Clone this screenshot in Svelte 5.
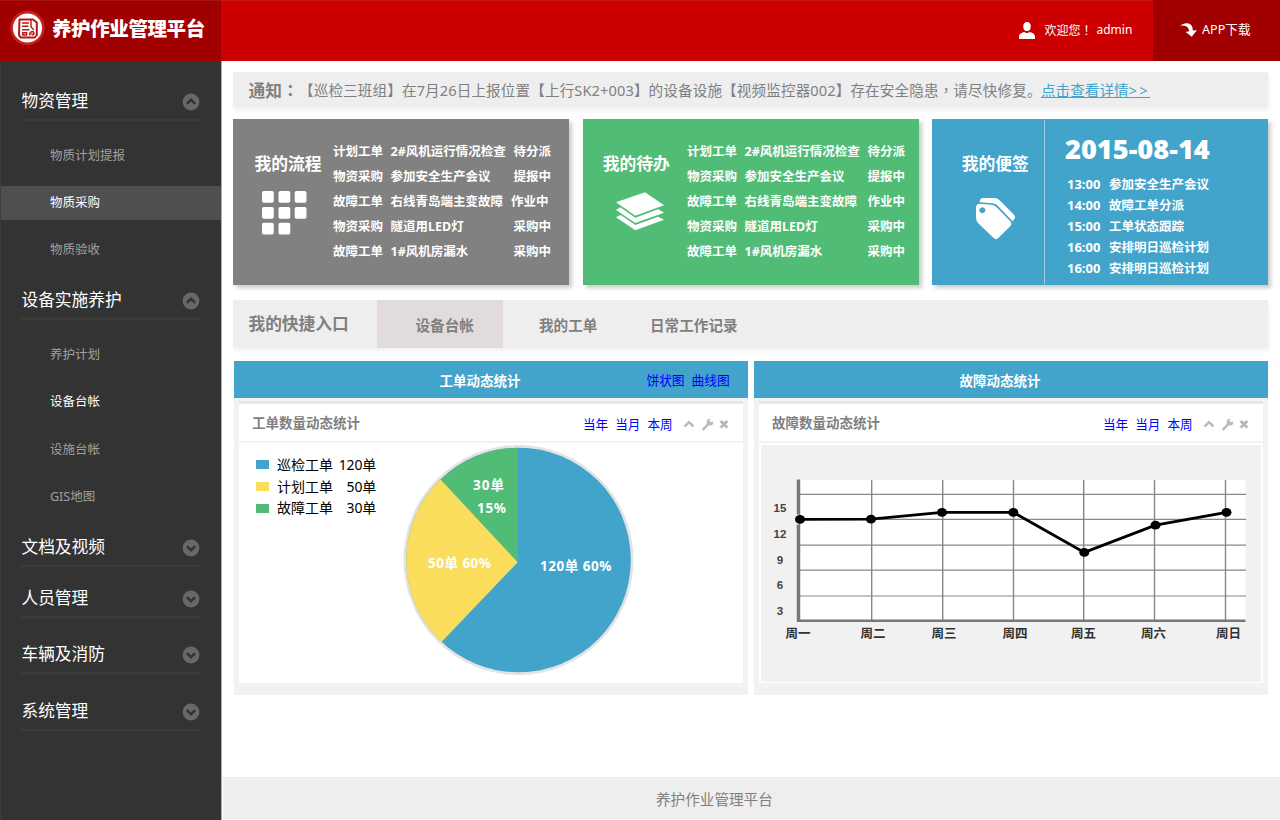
<script>
  const menu = [
    { title: '物资管理', open: true, gap: 19, items: ['物质计划提报', '物质采购', '物质验收'] },
    { title: '设备实施养护', open: true, gap: 0, items: ['养护计划', '设备台帐', '设施台帐', 'GIS地图'] },
    { title: '文档及视频', open: false, gap: 0, items: [] },
    { title: '人员管理', open: false, gap: 10, items: [] },
    { title: '车辆及消防', open: false, gap: 15, items: [] },
    { title: '系统管理', open: false, gap: 16, items: [] }
  ];
  const tasks = [
    ['计划工单', '2#风机运行情况检查', '待分派'],
    ['物资采购', '参加安全生产会议', '提报中'],
    ['故障工单', '右线青岛端主变故障', '作业中'],
    ['物资采购', '隧道用LED灯', '采购中'],
    ['故障工单', '1#风机房漏水', '采购中']
  ];
  const notes = [
    ['13:00', '参加安全生产会议'],
    ['14:00', '故障工单分派'],
    ['15:00', '工单状态跟踪'],
    ['16:00', '安排明日巡检计划'],
    ['16:00', '安排明日巡检计划']
  ];
  const legend = [
    ['blue', '巡检工单', '120单'],
    ['yellow', '计划工单', '50单'],
    ['green', '故障工单', '30单']
  ];
  const gridX = [871.7, 942.7, 1013.5, 1083.7, 1154.5, 1225.5];
  const gridY = [494.4, 519.4, 545.2, 570.2, 596];
  const points = [[800, 519.4], [871, 519.2], [942, 512.4], [1013.3, 512.4], [1084.3, 552.4], [1155.5, 525.2], [1226.5, 512.3]];
  const line = points.map((p) => p.join(',')).join(' ');
  const days = [['周一', 798], ['周二', 873], ['周三', 944], ['周四', 1015], ['周五', 1083.5], ['周六', 1153.5], ['周日', 1228.5]];
  const scale = [['15', 512], ['12', 538], ['9', 563.5], ['6', 588.5], ['3', 614.5]];
</script>

{#snippet tools()}
  <div class="tools">
    <a href="#year">当年</a><a href="#month">当月</a><a href="#week">本周</a>
    <svg width="48" height="14" viewBox="0 0 48 14">
      <path d="M2.500 9.500 7 5.200l4.500 4.300" fill="none" stroke="#bbb" stroke-width="2.500" />
      <path d="M21.300 12.300 26.500 7" stroke="#bbb" stroke-width="2.400" stroke-linecap="round" />
      <path d="M30.800 4.500 28.600 5.200 27.400 4 28.500 1.700A3.400 3.400 0 1 0 31.400 5.900z" fill="#bbb" />
      <path d="m38.700 4 6.600 6.600m0-6.600-6.600 6.600" stroke="#b4b4b4" stroke-width="2.700" />
    </svg>
  </div>
{/snippet}

{#snippet taskList()}
  <ul class="tasks">
    {#each tasks as t}
      <li><span>{t[0]}</span><span>{t[1]}</span><span class="state" class:busy={t[2] === '作业中'}>{t[2]}</span></li>
    {/each}
  </ul>
{/snippet}

<div class="page">
  <header>
    <div class="brand">
      <svg class="logo" width="36" height="36" viewBox="0 0 36 36">
        <circle cx="17.500" cy="18" r="17.300" fill="#c4201c" />
        <circle cx="17.500" cy="18" r="14.600" fill="#fff" />
        <g fill="none" stroke="#b81410" stroke-linejoin="round" stroke-linecap="round">
          <path d="M9.500 9.500h13.500l3.800 3v12.500l-2 2.500H10.500L9 25z" stroke-width="2" />
          <path d="M12.500 13h6M12.500 16.300h5.500M12.500 19.700h6.500M21 10.500v6.500l2.500 2.500" stroke-width="1.400" />
          <path d="M12.700 22.700h4v2.300h-4zM19.800 25c-.5-4 4.200-4.500 4.200-1.500 0 2-2.500 1.500-2.100 0" stroke-width="1.400" />
        </g>
      </svg>
      <h1>养护作业管理平台</h1>
    </div>
    <div class="user">
      <svg width="16" height="17" viewBox="0 0 16 17"><ellipse cx="8" cy="4.600" rx="3.700" ry="4.500" fill="#fff" /><path d="M0 17v-2.500c0-2.500 3-4 5.200-4.500Q8 12 10.800 10C13 10.500 16 12 16 14.500V17z" fill="#fff" /></svg>
      <span class="welcome">欢迎您<span class="mid">！</span></span><span>admin</span>
    </div>
    <a class="app" href="#app">
      <svg width="17" height="14" viewBox="0 0 17 14"><path d="M0 2.800C3 0 8-.6 10.500 1.600 12.500 3.300 12.800 5.500 12.800 7.500L17 7.300 11.700 13.800 5.700 9 9.200 8.200C9.200 5 6 1.500 0 2.800z" fill="#fff" /></svg>
      APP下载
    </a>
  </header>

  <div class="main">
    <nav>
      {#each menu as g}
        <section style:padding-top="{g.gap}px">
          <div class="group">
            <span>{g.title}</span>
            <svg width="18" height="18" viewBox="0 0 18 18">
              <circle cx="9" cy="9" r="8.400" fill="#686868" />
              <path d={g.open ? 'M4.800 10.800 9 6.800l4.200 4' : 'M4.800 7.200 9 11.200l4.200-4'} fill="none" stroke="#333" stroke-width="2.500" />
            </svg>
          </div>
          {#if g.items.length}
            <ul>
              {#each g.items as item}
                <li class:active={item === '物质采购'} class:lit={item === '设备台帐'}><span>{item}</span></li>
              {/each}
            </ul>
          {/if}
        </section>
      {/each}
    </nav>

    <main>
      <div class="notice">
        <b>通知<span class="mid">：</span></b><p>【巡检三班组】在7月26日上报位置【上行SK2+003】的设备设施【视频监控器002】存在安全隐患<span class="mid">，</span>请尽快修复。</p><a href="#detail">点击查看详情<span class="more">&gt;&gt;</span></a>
      </div>

      <div class="cards">
        <section class="card flow">
          <div class="label">
            <h2>我的流程</h2>
            <svg width="45" height="44" viewBox="0 0 45 44" fill="#fff">
              {#each [[0, 0], [16.500, 0], [32.700, 0], [0, 16], [16.500, 16], [32.700, 16], [0, 31.700], [16.500, 31.700]] as [x, y]}
                <rect {x} {y} width="11.800" height="11.800" rx="1.800" />
              {/each}
            </svg>
          </div>
          {@render taskList()}
        </section>
        <section class="card todo">
          <div class="label">
            <h2>我的待办</h2>
            <svg width="50" height="40" viewBox="120 243 150 120" fill="#fff">
              <path d="M210 247 267 286 181 317 123 277z" />
              <path d="M123 300 136 292 181 323 249 298 267 308 181 339z" />
              <path d="M123 322 137 315 181 345 249 320 267 329 181 361z" />
            </svg>
          </div>
          {@render taskList()}
        </section>
        <section class="card memo">
          <div class="label">
            <h2>我的便签</h2>
            <svg width="41" height="43" viewBox="165 261 123 129">
              <path d="M179 277Q179 264 190 264L222 264Q232 264 239 271L282 314Q288 321 283 327L278 334 236 290Q229 281 218 280z" fill="#fff" />
              <path fill-rule="evenodd" d="M168 292Q168 281 180 281L213 284Q222 284 229 291L271 334Q277 341 272 347L235 384Q228 391 221 384L174 339Q168 333 168 321zM187 292a9 9 0 1 0 .1 0z" fill="#fff" />
            </svg>
          </div>
          <div class="agenda">
            <strong>2015-08-14</strong>
            <ul>
              {#each notes as n}<li><span>{n[0]}</span><span>{n[1]}</span></li>{/each}
            </ul>
          </div>
        </section>
      </div>

      <div class="quick">
        <h2>我的快捷入口</h2>
        <span class="tab on">设备台帐</span><span class="tab second">我的工单</span><span class="tab">日常工作记录</span>
      </div>

      <div class="panels">
        <section class="panel">
          <div class="bar"><h3>工单动态统计</h3><div class="views"><a href="#pie">饼状图</a><a href="#line">曲线图</a></div></div>
          <div class="sub"><h4>工单数量动态统计</h4>{@render tools()}</div>
          <div class="body">
            <ul class="legend">
              {#each legend as l}<li><i class={l[0]}></i><span>{l[1]}</span><span class="num">{l[2]}</span></li>{/each}
            </ul>
            <svg class="pie" width="232" height="232" viewBox="402 444 232 232">
              <circle cx="518.500" cy="560" r="115" fill="#e3e3e3" />
              <circle cx="518.500" cy="560" r="112.300" fill="#42a3cb" />
              <path d="M518 562 441.500 642A112.300 112.300 0 0 1 440.500 479.300z" fill="#fadd5c" />
              <path d="M518 562.500 440.800 479.400A112.300 112.300 0 0 1 518 447.700z" fill="#51bc76" />
              <g class="pie-text">
                <text x="473" y="489.500" textLength="31">30单</text>
                <text x="477" y="512.800" textLength="29">15%</text>
                <text x="428" y="567.500" textLength="63">50单 60%</text>
                <text x="540" y="571" textLength="71.500">120单 60%</text>
              </g>
            </svg>
          </div>
        </section>

        <section class="panel">
          <div class="bar"><h3>故障动态统计</h3></div>
          <div class="sub"><h4>故障数量动态统计</h4>{@render tools()}</div>
          <div class="body plot">
            <svg width="499" height="236" viewBox="761 445 499 236">
              <rect x="798" y="480" width="447.500" height="141" rx="2" fill="#fff" />
              {#each gridY as y}<path d="M800 {y}H1246" stroke="#888" stroke-width="1.200" />{/each}
              {#each gridX as x}<path d="M{x} 480V621" stroke="#858585" stroke-width="1.400" />{/each}
              <path d="M798.500 479.500V622" stroke="#777" stroke-width="3.500" />
              <path d="M797 620.700H1245.500" stroke="#777" stroke-width="2.500" />
              <rect x="796" y="514.500" width="3" height="10" fill="#f1f1f1" />
              <polyline points={line} fill="none" stroke="#000" stroke-width="2.800" />
              {#each points as p}<ellipse cx={p[0]} cy={p[1]} rx="5" ry="4.400" />{/each}
              <g class="scale">{#each scale as s}<text x="780" y={s[1]}>{s[0]}</text>{/each}</g>
              <g class="days">{#each days as d}<text x={d[1]} y="637.800">{d[0]}</text>{/each}</g>
            </svg>
          </div>
        </section>
      </div>

      <footer>养护作业管理平台</footer>
    </main>
  </div>
</div>

<style>
  :global(body) { background: #fff; overflow: hidden; }
  * { box-sizing: border-box; margin: 0; padding: 0; }
  ul { list-style: none; }
  svg { display: block; flex: none; }
  .page {
    width: 1280px; height: 820px; overflow: hidden; display: flex; flex-direction: column;
    font-family: "Noto Sans", "Noto Sans CJK SC", sans-serif; color: #808080; white-space: nowrap;
  }
  .mid { font-family: "Noto Sans CJK TC", sans-serif; line-height: 1; }
  header { height: 61px; flex: none; display: flex; background: #c00; color: #fff; border-top: 1px solid #c51614; }
  .brand { width: 221px; margin-top: -1px; background: #a00000; display: flex; padding: 10px 0 0 10px; border-top: 1px solid #a91414; }
  .logo { margin-top: -1px; }
  h1 { font: 900 19.500px/33px "Noto Sans CJK SC", sans-serif; letter-spacing: -.4px; margin-left: 6px; }
  .user { margin-left: auto; display: flex; width: 134px; height: 57px; align-items: center; font-size: 12px; }
  .welcome { margin: 0 1px 0 9.500px; width: 51px; }
  .user svg { margin-top: 1px; }
  .app { width: 127px; margin-top: -1px; background: #a00000; display: flex; align-items: center; padding: 0 0 4px 27px; gap: 5px; font-size: 12.600px; color: #fff; text-decoration: none; }
  .app svg { margin-top: 3px; }
  .main { flex: 1; display: flex; min-height: 0; }
  nav { width: 222px; background: #333; border-right: 1px solid #aaa; border-left: 1px solid #3d3d3d; flex: none; }
  .group { margin: 0 20px 0 19px; height: 41px; border-bottom: 2px solid #3a3a3a; display: flex; justify-content: space-between; font-size: 16.700px; line-height: 41px; color: #fff; padding: 0 1px 0 1.500px; }
  .group svg { margin-top: 12.700px; }
  nav ul { padding: 11.200px 0 5.300px; }
  nav li { height: 47.300px; display: flex; align-items: center; font-size: 12.500px; color: #a0a0a0; }
  nav li span { flex: 1; padding-left: 49px; line-height: 34.600px; }
  nav li.active span { background: #4f4f4f; color: #fff; }
  nav li.lit { color: #fff; }
  main { flex: 1; min-width: 0; display: flex; flex-direction: column; padding: 11px 0 0 11px; }
  .notice { width: 1035px; height: 35px; flex: none; background: #eee; box-shadow: 1px 3px 5px rgba(0,0,0,.06); display: flex; align-items: center; padding-left: 15.500px; font-size: 14.600px; }
  .notice b { width: 50.500px; font-size: 16.700px; }
  .notice p { width: 742px; letter-spacing: .11px; }
  .notice a { color: #42a3cb; }
  .more { letter-spacing: 2.300px; }
  .cards { display: flex; margin-top: 12px; gap: 13.500px; width: 1035px; }
  .card { flex: 1; height: 166px; display: flex; color: #fff; font-weight: 700; box-shadow: 3px 3px 4px rgba(0,0,0,.2); }
  .flow { background: #818181; }
  .todo { background: #51bc76; }
  .memo { background: #42a3cb; }
  .label { height: 166px; display: flex; flex-direction: column; align-items: center; padding-top: 32px; }
  h2 { font-size: 16.800px; line-height: 26px; }
  .label svg { margin-top: 14px; }
  .flow .label { width: 100px; padding-left: 10px; }
  .flow svg { margin-right: 7px; }
  .todo .label { width: 104.500px; padding-left: 3px; }
  .todo .label svg { margin-left: 8px; }
  .memo .label { width: 113px; padding-left: 14.500px; margin: 1px 0; height: 164px; border-right: 1px solid #9bcde3; padding-top: 31px; }
  .memo .label svg { margin-top: 20px; }
  .tasks { width: 218px; padding-top: 20px; font-size: 12.500px; line-height: 25px; }
  .tasks li { display: flex; }
  .tasks span:first-child { width: 57.500px; }
  .state { margin-left: auto; }
  .flow .busy { margin-right: 2.500px; }
  .agenda { padding: 13px 0 0 20px; }
  .agenda strong { display: block; font-size: 27.200px; line-height: 33px; }
  .agenda ul { padding: 9px 0 0 2px; font-size: 12.500px; line-height: 21px; }
  .agenda li span:first-child { display: inline-block; width: 42px; font-size: 13px; }
  .quick { width: 1035px; height: 48px; flex: none; margin-top: 15px; background: #eee; box-shadow: 1px 3px 5px rgba(0,0,0,.06); display: flex; align-items: center; font-weight: 700; }
  .quick h2 { width: 144px; padding-left: 15.500px; font-size: 16.700px; }
  .tab { font-size: 14.600px; line-height: 48px; padding-top: 1px; height: 48px; }
  .tab.on { width: 126px; padding-left: 38.500px; background: #e1dbdb; }
  .tab.second { width: 147px; padding-left: 36px; }
  .panels { display: flex; gap: 6px; margin: 13px 0 0 1px; }
  .panel { width: 514px; height: 334px; background: #f2f2f3; padding: 0 5px; }
  .bar { height: 37px; margin: 0 -5px; background: #42a3cb; display: flex; justify-content: flex-end; color: #fff; }
  h3 { font-size: 13.500px; line-height: 40px; width: 81px; margin-right: 227.500px; }
  .views { display: flex; width: 101.500px; gap: 7px; margin-left: -101.500px; font-size: 12.700px; line-height: 38px; }
  .panel a { color: #00f; text-decoration: none; }
  .sub { height: 40px; margin-top: 3px; border-top: 3px solid #e3e8eb; background: #fff; display: flex; justify-content: space-between; padding-left: 13px; }
  h4 { font-size: 13.500px; line-height: 38px; }
  .tools { display: flex; width: 160px; font-size: 12.600px; line-height: 41px; gap: 7px; }
  .tools svg { margin: 13px 10px 0 2px; }
  .body { margin-top: 2px; height: 240px; background: #fff; display: flex; }
  .legend { width: 137px; padding: 11px 0 0 17px; flex: none; color: #000; font-size: 14px; line-height: 21.700px; }
  .legend li { display: flex; align-items: center; }
  .legend i { width: 13px; height: 9px; margin-right: 8px; }
  .num { margin-left: auto; letter-spacing: -.2px; }
  .blue { background: #42a3cb; } .yellow { background: #fadd5c; } .green { background: #51bc76; }
  .pie { margin: 1px 0 0 26px; }
  .pie-text { fill: #fff; font-size: 13.500px; font-weight: 700; }
  .plot { border: 2px solid #fff; border-bottom-width: 1px; background: #f1f1f1; }
  .scale { font: 700 11.500px "Liberation Sans", sans-serif; fill: #444; text-anchor: middle; }
  .days { font: 700 12.500px "Noto Sans CJK SC", sans-serif; fill: #333; text-anchor: middle; }
  footer { margin: auto 0 1px -10px; height: 42px; flex: none; background: #eee; padding-left: 433px; font-size: 14.600px; line-height: 44px; }
</style>
